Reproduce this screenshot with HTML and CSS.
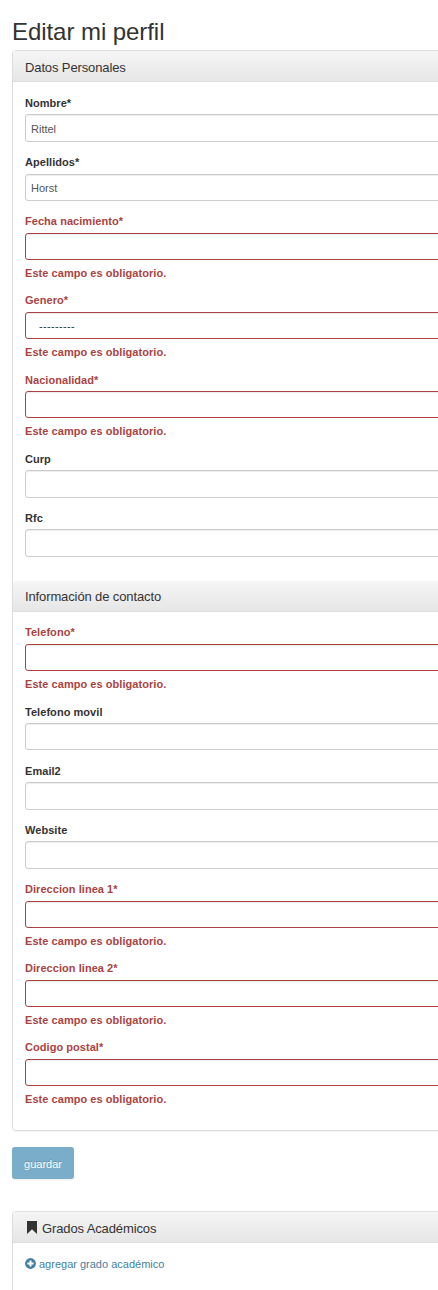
FILE: index.html
```html
<!DOCTYPE html>
<html lang="es">
<head>
<meta charset="utf-8">
<title>Editar mi perfil</title>
<link rel="stylesheet" href="styles.css">
</head>
<body>
<main class="page">
  <h1 class="title">Editar mi perfil</h1>
  <form class="panel">
    <h2 class="panel-heading">Datos Personales</h2>
    <div class="panel-body">
      <div class="field"><label>Nombre*</label><div class="control">Rittel</div></div>
      <div class="field"><label>Apellidos*</label><div class="control">Horst</div></div>
      <div class="field error"><label>Fecha nacimiento*</label><div class="control"></div><p class="help">Este campo es obligatorio.</p></div>
      <div class="field error"><label>Genero*</label><div class="control select">---------</div><p class="help">Este campo es obligatorio.</p></div>
      <div class="field error"><label>Nacionalidad*</label><div class="control"></div><p class="help">Este campo es obligatorio.</p></div>
      <div class="field"><label>Curp</label><div class="control"></div></div>
      <div class="field"><label>Rfc</label><div class="control"></div></div>
    </div>
    <h2 class="panel-heading">Información de contacto</h2>
    <div class="panel-body last">
      <div class="field error"><label>Telefono*</label><div class="control"></div><p class="help">Este campo es obligatorio.</p></div>
      <div class="field"><label>Telefono movil</label><div class="control"></div></div>
      <div class="field"><label>Email2</label><div class="control"></div></div>
      <div class="field"><label>Website</label><div class="control"></div></div>
      <div class="field error"><label>Direccion linea 1*</label><div class="control"></div><p class="help">Este campo es obligatorio.</p></div>
      <div class="field error"><label>Direccion linea 2*</label><div class="control"></div><p class="help">Este campo es obligatorio.</p></div>
      <div class="field error"><label>Codigo postal*</label><div class="control"></div><p class="help">Este campo es obligatorio.</p></div>
    </div>
  </form>
  <button class="btn" type="button">guardar</button>
  <section class="panel degrees">
    <h2 class="panel-heading"><svg class="bookmark" viewBox="0 0 10 13"><path d="M0 0H10V13L5 8.3L0 13Z" fill="#333"/></svg>Grados Académicos</h2>
    <div class="panel-body">
      <a class="add"><svg class="plus" viewBox="0 0 11 11"><circle cx="5.5" cy="5.5" r="5.4" fill="#457fa0"/><path d="M5.5 2.4V8.6M2.4 5.5H8.6" stroke="#fff" stroke-width="2"/></svg>agregar grado académico</a>
    </div>
  </section>
</main>
</body>
</html>
```
FILE: styles.css
```css
* { box-sizing: border-box; }
body {
  margin: 0;
  background: #fff;
  color: #333;
  font: 11px/15.7px "Liberation Sans", Arial, sans-serif;
}
.page { height: 1290px; padding: 18px 0 0 12px; overflow: hidden; }
.title { margin: 0 0 5px; font-size: 24px; line-height: 27px; font-weight: 400; letter-spacing: -.06px; }
/* Panels run on past the right edge of the page. */
.panel {
  margin-right: -20px;
  border: 1px solid #ddd;
  border-radius: 4px;
  box-shadow: 0 1px 1px rgba(0, 0, 0, .05);
}
.panel-heading {
  display: flex;
  align-items: center;
  height: 31px;
  margin: 0;
  padding: 3px 12px 0;
  border-bottom: 1px solid #ddd;
  border-radius: 3px 3px 0 0;
  background: linear-gradient(#f5f5f5, #e6e6e6);
  font-size: 13px;
  font-weight: 400;
  letter-spacing: -.12px;
}
.panel-body { padding: 12.65px 12px 12px; }
.panel-body.last { padding: 12.3px 12px 11.4px; }
.field { height: 59.22px; }
.field.error { height: 79.12px; color: #a94442; }
.field label {
  display: block;
  height: 19.8px;
  padding-top: 1.3px;
  font-weight: 700;
  letter-spacing: .05px;
  white-space: nowrap;
}
.control {
  height: 27.3px;
  padding: 6.5px 5px 0;
  border: 1px solid #ccc;
  border-radius: 3px;
  box-shadow: inset 0 1px 1px rgba(0, 0, 0, .075);
  color: #555;
}
.error .control { border-color: #a94442; }
.control.select { padding-left: 13px; color: #333; letter-spacing: .35px; }
.help { margin: 5.5px 0 0; font-weight: 700; letter-spacing: .05px; }
.btn {
  display: block;
  width: 62px;
  height: 32px;
  margin: 16px 0 32px;
  padding: 4px 0 0;
  border: 0;
  border-radius: 3px;
  background: #79adc9;
  color: #fff;
  font: 11px/15px "Liberation Sans", Arial, sans-serif;
  text-shadow: 0 -1px 0 rgba(0, 0, 0, .2);
  box-shadow: 0 1px 2px rgba(0, 0, 0, .08);
}
.degrees { height: 120px; }
.degrees .panel-heading { padding-top: 4.5px; }
.bookmark { width: 10px; height: 13px; margin: -2px 5px 0 2px; }
.add { display: flex; align-items: center; padding-top: 2px; color: #457fa0; }
.plus { width: 11px; height: 11px; margin: -3px 3px 0 0; }
```
